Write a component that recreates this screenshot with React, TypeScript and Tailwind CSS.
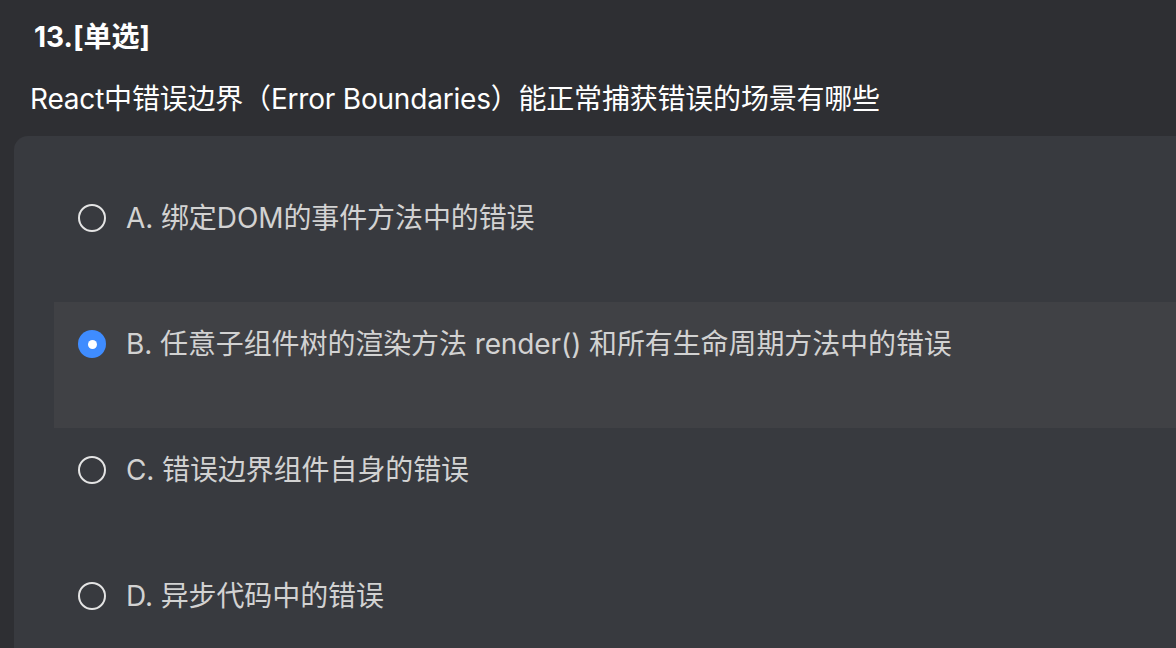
import React from "react";

const options = [
  { key: "A", text: "绑定DOM的事件方法中的错误" },
  { key: "B", text: "任意子组件树的渲染方法 render() 和所有生命周期方法中的错误" },
  { key: "C", text: "错误边界组件自身的错误" },
  { key: "D", text: "异步代码中的错误" },
];

export default function App() {
  const selected = "B";
  return (
    <div
      className="h-screen overflow-hidden bg-[#2e2f33] pt-[17px] flex flex-col"
      style={{ fontFamily: 'Inter, "Noto Sans CJK SC", sans-serif' }}
    >
      <div className="pl-[34px] text-[28px] leading-[40px] font-bold text-white">13.[单选]</div>
      <div className="pl-[30px] mt-[22px] text-[28px] leading-[40px] tracking-[-0.2px] text-white">
        React中错误边界（Error Boundaries）能正常捕获错误的场景有哪些
      </div>
      <div className="ml-[14px] mt-[17px] flex-1 rounded-tl-[14px] bg-[#383a3f] pt-[40px] pl-[40px]">
        {options.map((o) => {
          const isSel = o.key === selected;
          return (
            <div
              key={o.key}
              className={`h-[126px] pl-[24px] pt-[22px] ${isSel ? "bg-[#404145]" : ""}`}
            >
              <div className="flex h-[40px] items-center">
                {isSel ? (
                  <span className="flex h-[28px] w-[28px] items-center justify-center rounded-full bg-[#3f8cff]">
                    <span className="h-[9px] w-[9px] rounded-full bg-white" />
                  </span>
                ) : (
                  <span className="h-[28px] w-[28px] rounded-full border-2 border-[#e4e4e4]" />
                )}
                <span className="ml-[20px] text-[28px] leading-[40px] tracking-[-0.1px] text-[#d2d2d2]">
                  {o.key}. {o.text}
                </span>
              </div>
            </div>
          );
        })}
      </div>
    </div>
  );
}
